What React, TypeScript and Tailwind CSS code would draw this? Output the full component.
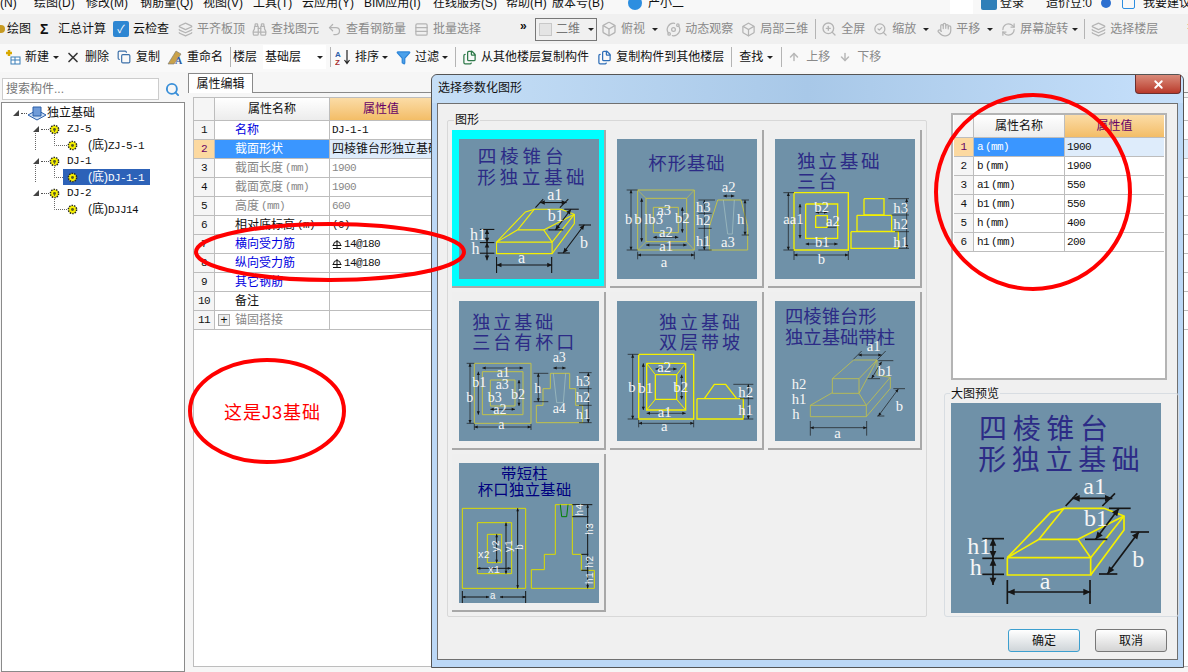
import type { ReactNode } from "react";
import {
  ArrowDown,
  ArrowUp,
  Binoculars,
  Box,
  Copy,
  Files,
  Filter,
  Hand,
  Layers,
  Orbit,
  RefreshCw,
  Rows3,
  Search,
  SearchCheck,
  Undo2,
  X,
  ZoomIn,
} from "lucide-react";

// ---- parametric figures, coordinates are taken straight from the picture ----
type Fig = {
  vb: string;
  titles: { text: string; x: number; y: number; adv: number; size: number; color?: string }[];
  polys: { pts: string; color: string; w: number; open?: boolean }[];
  dims: number[][];
  ticks: number[][];
  labels: (string | number)[][];
  labelSize: number;
  mono?: boolean;
  line: number;
  arrow: number;
};

const Y1 = "#f4f000";
const OL = "#c2c24a";

function rect(a: number, b: number, c: number, d: number) {
  return `${a},${b} ${c},${b} ${c},${d} ${a},${d} ${a},${b}`;
}

const fig1: Fig = {
  vb: "66 69 630 630",
  titles: [
    { text: "四棱锥台", x: 150, y: 176, adv: 101, size: 84 },
    { text: "形独立基础", x: 148, y: 270, adv: 100, size: 84 },
  ],
  polys: [
    { pts: rect(235, 533, 485, 585), color: Y1, w: 5 },
    { pts: "235,533 365,397 405,385 525,385 585,408 585,450 485,585", color: Y1, w: 5, open: true },
    { pts: "235,533 330,478 447,478 485,533", color: Y1, w: 5, open: true },
    { pts: "330,478 405,385", color: Y1, w: 5, open: true },
    { pts: "447,478 585,408", color: Y1, w: 5, open: true },
    { pts: "485,533 585,408", color: Y1, w: 5, open: true },
  ],
  dims: [
    [235, 636, 485, 636],
    [192, 475, 192, 535],
    [192, 535, 192, 615],
    [430, 355, 550, 355],
    [570, 385, 500, 478],
    [630, 455, 535, 582],
  ],
  ticks: [
    [235, 600, 235, 672],
    [483, 600, 483, 672],
    [160, 476, 225, 476],
    [160, 535, 225, 535],
    [160, 583, 225, 583],
    [410, 378, 445, 340],
    [520, 378, 558, 340],
    [540, 385, 605, 385],
    [468, 478, 535, 478],
    [605, 456, 660, 456],
    [510, 582, 565, 582],
  ],
  labels: [
    ["a1", 463, 343],
    ["b1", 465, 437],
    ["b", 610, 560],
    ["h1", 115, 522],
    ["h", 122, 586],
    ["a", 332, 626],
  ],
  labelSize: 72,
  line: 5,
  arrow: 22,
};

const fig2: Fig = {
  vb: "516 57 420 420",
  titles: [{ text: "杯形基础", x: 610, y: 150, adv: 58, size: 55 }],
  polys: [
    { pts: rect(578, 210, 748, 390), color: OL, w: 3 },
    { pts: rect(603, 235, 725, 365), color: OL, w: 3 },
    { pts: rect(625, 262, 700, 338), color: OL, w: 3 },
    { pts: "578,210 603,235", color: OL, w: 2, open: true },
    { pts: "748,210 725,235", color: OL, w: 2, open: true },
    { pts: "578,390 603,365", color: OL, w: 2, open: true },
    { pts: "748,390 725,365", color: OL, w: 2, open: true },
    { pts: "818,240 888,240 908,320 908,390 793,390 793,320 818,240", color: OL, w: 3 },
    { pts: "835,240 848,342 862,342 868,240", color: "#a9c6c6", w: 2, open: true },
  ],
  dims: [
    [558, 210, 558, 390],
    [590, 235, 590, 365],
    [712, 262, 712, 338],
    [603, 375, 725, 375],
    [625, 352, 700, 352],
    [578, 405, 748, 405],
    [835, 228, 868, 228],
    [778, 240, 778, 390],
    [900, 240, 900, 345],
  ],
  ticks: [
    [545, 210, 578, 210],
    [545, 390, 578, 390],
    [578, 395, 578, 418],
    [748, 395, 748, 418],
    [760, 240, 810, 240],
    [760, 280, 800, 280],
    [760, 325, 800, 325],
    [760, 390, 800, 390],
    [890, 240, 912, 240],
    [890, 345, 912, 345],
  ],
  labels: [
    ["b", 540, 312],
    ["b", 568, 312],
    ["l", 598, 312],
    ["b3", 610, 312],
    ["a3", 637, 285],
    ["b2", 690, 310],
    ["a2", 642, 350],
    ["a1", 643, 392],
    ["a", 647, 442],
    ["a2", 830, 216],
    ["h3", 753, 275],
    ["h2", 753, 315],
    ["h1", 753, 378],
    ["h", 876, 312],
    ["a3", 828, 380],
  ],
  labelSize: 44,
  line: 2,
  arrow: 10,
};

const fig3: Fig = {
  vb: "990 57 420 420",
  titles: [
    { text: "独立基础", x: 1056, y: 143, adv: 64, size: 56 },
    { text: "三台", x: 1056, y: 205, adv: 64, size: 56 },
  ],
  polys: [
    { pts: rect(1047, 218, 1210, 390), color: Y1, w: 4 },
    { pts: rect(1082, 252, 1178, 355), color: Y1, w: 4 },
    { pts: rect(1112, 287, 1147, 322), color: Y1, w: 4 },
    { pts: rect(1257, 236, 1317, 285), color: Y1, w: 4 },
    { pts: rect(1236, 286, 1340, 334), color: Y1, w: 4 },
    { pts: rect(1218, 335, 1360, 385), color: Y1, w: 4 },
  ],
  dims: [
    [1030, 218, 1030, 390],
    [1065, 252, 1065, 355],
    [1082, 372, 1178, 372],
    [1047, 405, 1210, 405],
    [1385, 236, 1385, 385],
    [1112, 277, 1147, 277],
  ],
  ticks: [
    [1015, 218, 1047, 218],
    [1015, 390, 1047, 390],
    [1047, 393, 1047, 420],
    [1210, 393, 1210, 420],
    [1330, 236, 1392, 236],
    [1340, 285, 1392, 285],
    [1350, 335, 1392, 335],
    [1360, 385, 1392, 385],
    [1147, 322, 1175, 322],
  ],
  labels: [
    ["aa1", 1015, 312],
    ["b2", 1108, 277],
    ["a2", 1143, 317],
    ["b1", 1110, 382],
    ["b", 1118, 432],
    ["h3", 1345, 278],
    ["h2", 1345, 327],
    ["h1", 1345, 380],
  ],
  labelSize: 44,
  line: 2,
  arrow: 10,
};

const fig4: Fig = {
  vb: "42 33 420 420",
  titles: [
    { text: "独立基础", x: 82, y: 117, adv: 63, size: 54 },
    { text: "三台有杯口", x: 82, y: 178, adv: 63, size: 54 },
  ],
  polys: [
    { pts: rect(88, 220, 258, 400), color: OL, w: 3 },
    { pts: rect(112, 245, 234, 374), color: OL, w: 3 },
    { pts: rect(136, 270, 210, 348), color: OL, w: 3 },
    {
      pts: "316,250 374,250 374,296 392,296 392,346 413,346 413,398 274,398 274,346 294,346 294,296 316,296 316,250",
      color: OL,
      w: 3,
    },
    { pts: "325,250 335,338 355,338 362,250", color: "#a9c6c6", w: 2, open: true },
  ],
  dims: [
    [75, 220, 75, 400],
    [100, 245, 100, 374],
    [222, 270, 222, 348],
    [112, 234, 234, 234],
    [136, 358, 210, 358],
    [88, 411, 258, 411],
    [325, 234, 362, 234],
    [280, 250, 280, 335],
    [430, 248, 430, 398],
  ],
  ticks: [
    [65, 220, 88, 220],
    [65, 400, 88, 400],
    [88, 402, 88, 420],
    [258, 402, 258, 420],
    [266, 250, 310, 250],
    [266, 335, 310, 335],
    [402, 248, 440, 248],
    [402, 296, 440, 296],
    [402, 346, 440, 346],
    [402, 398, 440, 398],
  ],
  labels: [
    ["b", 64, 335],
    ["b1", 82, 292],
    ["a1", 155, 260],
    ["a3", 152, 298],
    ["b3", 128, 335],
    ["b2", 198, 328],
    ["a2", 145, 372],
    ["a", 160, 417],
    ["a3", 323, 215],
    ["h", 268, 308],
    ["h3", 393, 288],
    ["h2", 393, 337],
    ["h1", 393, 388],
    ["a4", 323, 370],
  ],
  labelSize: 42,
  line: 2,
  arrow: 10,
};

const fig5: Fig = {
  vb: "516 33 420 420",
  titles: [
    { text: "独立基础", x: 642, y: 117, adv: 63, size: 54 },
    { text: "双层带坡", x: 642, y: 178, adv: 63, size: 54 },
  ],
  polys: [
    { pts: rect(581, 193, 746, 387), color: Y1, w: 4 },
    { pts: rect(605, 220, 722, 360), color: Y1, w: 4 },
    { pts: rect(631, 254, 695, 328), color: Y1, w: 4 },
    { pts: "605,220 631,254", color: Y1, w: 3, open: true },
    { pts: "722,220 695,254", color: Y1, w: 3, open: true },
    { pts: "605,360 631,328", color: Y1, w: 3, open: true },
    { pts: "722,360 695,328", color: Y1, w: 3, open: true },
    { pts: rect(756, 326, 895, 387), color: Y1, w: 4 },
    { pts: "778,326 808,283 842,283 875,326", color: Y1, w: 4, open: true },
  ],
  dims: [
    [563, 193, 563, 387],
    [595, 220, 595, 360],
    [710, 254, 710, 328],
    [631, 237, 695, 237],
    [605, 370, 722, 370],
    [581, 400, 746, 400],
    [910, 283, 910, 387],
  ],
  ticks: [
    [548, 193, 581, 193],
    [548, 387, 581, 387],
    [581, 390, 581, 412],
    [746, 390, 746, 412],
    [865, 283, 925, 283],
    [885, 326, 925, 326],
    [895, 387, 925, 387],
  ],
  labels: [
    ["b", 550, 305],
    ["b1", 580, 310],
    ["a2", 637, 245],
    ["b2", 685, 307],
    ["a1", 638, 382],
    ["a", 648, 424],
    ["h2", 880, 322],
    ["h1", 880, 374],
  ],
  labelSize: 44,
  line: 2,
  arrow: 10,
};

const fig6: Fig = {
  vb: "990 33 420 420",
  titles: [
    { text: "四棱锥台形", x: 1020, y: 100, adv: 55, size: 55 },
    { text: "独立基础带柱", x: 1020, y: 163, adv: 55, size: 55 },
  ],
  polys: [
    { pts: rect(1096, 346, 1264, 380), color: OL, w: 2.5 },
    { pts: rect(1162, 266, 1242, 310), color: OL, w: 2.5 },
    { pts: "1162,266 1226,210 1296,210 1242,266", color: OL, w: 2.5, open: true },
    { pts: "1096,346 1162,308", color: OL, w: 2.5, open: true },
    { pts: "1242,310 1296,210 1296,255 1336,262 1336,295 1264,380", color: OL, w: 2.5, open: true },
    { pts: "1242,310 1264,346 1336,262", color: OL, w: 2.5, open: true },
  ],
  dims: [
    [1240, 195, 1310, 195],
    [1310, 215, 1280, 265],
    [1360, 297, 1300, 378],
    [1096, 413, 1265, 413],
  ],
  ticks: [
    [1225, 208, 1250, 183],
    [1298, 208, 1322, 183],
    [1300, 212, 1345, 212],
    [1268, 266, 1305, 266],
    [1345, 296, 1380, 296],
    [1296, 378, 1318, 378],
    [1096, 393, 1096, 437],
    [1265, 393, 1265, 437],
  ],
  labels: [
    ["a1", 1265, 183],
    ["b1", 1298, 258],
    ["b", 1352, 362],
    ["a", 1168, 445],
    ["h2", 1040, 298],
    ["h1", 1040, 343],
    ["h", 1042, 388],
  ],
  labelSize: 44,
  line: 2,
  arrow: 10,
};

const fig7: Fig = {
  vb: "42 24 420 420",
  titles: [
    { text: "带短柱", x: 168, y: 72, adv: 47, size: 46, color: "#00007f" },
    { text: "杯口独立基础", x: 98, y: 120, adv: 47, size: 46, color: "#00007f" },
  ],
  polys: [
    { pts: rect(52, 160, 242, 400), color: "#dcdc00", w: 3 },
    { pts: rect(97, 203, 200, 356), color: "#dcdc00", w: 3 },
    { pts: rect(127, 238, 170, 323), color: "#dcdc00", w: 3 },
    {
      pts: "331,149 382,149 382,298 409,298 409,346 448,346 448,400 259,400 259,344 298,344 298,298 331,298 331,149",
      color: "#dcdc00",
      w: 3,
    },
    { pts: "346,149 350,185 365,185 369,149", color: "#008000", w: 3, open: true },
  ],
  dims: [
    [218, 160, 218, 400],
    [183, 203, 183, 356],
    [155, 238, 155, 323],
    [97, 340, 197, 340],
    [52, 426, 132, 426],
    [165, 426, 242, 426],
    [428, 149, 428, 400],
  ],
  ticks: [
    [52, 408, 52, 444],
    [242, 408, 242, 444],
    [382, 149, 442, 149],
    [382, 185, 430, 185],
    [409, 298, 430, 298],
    [409, 346, 430, 346],
  ],
  labels: [
    ["b", 235, 285, -90],
    ["y1", 200, 292, -90],
    ["y2", 162, 292, -90],
    ["x2", 98, 308],
    ["x1", 128, 354],
    ["a", 134, 432],
    ["h4", 415, 182, -90],
    ["h3", 445, 240, -90],
    ["h2", 445, 338, -90],
    ["h1", 445, 388, -90],
  ],
  labelSize: 30,
  mono: true,
  line: 3,
  arrow: 9,
};

function Figure({ fig }: { fig: Fig }) {
  const [vx, vy, vw, vh] = fig.vb.split(" ").map(Number);
  return (
    <svg viewBox={fig.vb} className="block h-full w-full">
      <rect x={vx} y={vy} width={vw} height={vh} fill="#6f91a8" />
      {fig.titles.map((t) => (
        <text
          key={t.text}
          x={Array.from(t.text)
            .map((_, i) => t.x + i * t.adv)
            .join(" ")}
          y={t.y}
          fontSize={t.size}
          fill={t.color ?? "#2c2b86"}
          fontFamily="'Noto Sans CJK SC', sans-serif"
        >
          {t.text}
        </text>
      ))}
      {fig.polys.map((p, i) => (
        <polyline key={i} points={p.pts} fill="none" stroke={p.color} strokeWidth={p.w} />
      ))}
      {fig.ticks.map((l, i) => (
        <line key={i} x1={l[0]} y1={l[1]} x2={l[2]} y2={l[3]} stroke="#161616" strokeWidth={fig.line} />
      ))}
      {fig.dims.map((l, i) => {
        const ang = Math.atan2(l[3] - l[1], l[2] - l[0]);
        const a = fig.arrow;
        const head = (x: number, y: number, d: number) => {
          const bx = x + Math.cos(ang) * a * d;
          const by = y + Math.sin(ang) * a * d;
          const nx = (-Math.sin(ang) * a) / 2.2;
          const ny = (Math.cos(ang) * a) / 2.2;
          return `${x},${y} ${bx + nx},${by + ny} ${bx - nx},${by - ny}`;
        };
        return (
          <g key={i} fill="#161616">
            <line x1={l[0]} y1={l[1]} x2={l[2]} y2={l[3]} stroke="#161616" strokeWidth={fig.line} />
            <polygon points={head(l[0], l[1], 1)} />
            <polygon points={head(l[2], l[3], -1)} />
          </g>
        );
      })}
      {fig.labels.map((l, i) => (
        <text
          key={i}
          x={l[1]}
          y={l[2]}
          fontSize={fig.labelSize}
          fill="#f6f6f6"
          fontFamily={fig.mono ? "'Liberation Mono', monospace" : "'Liberation Serif', serif"}
          transform={l[3] ? `rotate(${l[3]} ${l[1]} ${l[2]})` : undefined}
        >
          {l[0]}
        </text>
      ))}
    </svg>
  );
}

// ---- small pieces ----
function Mono({ children, className = "" }: { children: ReactNode; className?: string }) {
  return <span className={`font-['Liberation_Mono',monospace] text-[11px] tracking-[-0.6px] ${className}`}>{children}</span>;
}

function Caret({ className = "" }: { className?: string }) {
  return <span className={`h-0 w-0 shrink-0 border-x-[3px] border-t-[3px] border-x-transparent border-t-[#222] ${className}`} />;
}

function Sep({ className = "" }: { className?: string }) {
  return <span className={`h-[20px] w-px shrink-0 bg-[#b4b4b4] ${className}`} />;
}

function Tool({ icon, label, off, className = "" }: { icon: ReactNode; label: string; off?: boolean; className?: string }) {
  return (
    <div className={`flex shrink-0 items-center gap-[4px] ${off ? "text-[#8a8a8a]" : "text-[#111]"} ${className}`}>
      <span className="flex h-4 w-4 items-center justify-center">{icon}</span>
      <span>{label}</span>
    </div>
  );
}

function Gear() {
  return (
    <svg viewBox="0 0 12 12" className="h-[11px] w-[11px] shrink-0">
      <circle cx="6" cy="6" r="4.5" fill="#f6f000" stroke="#222" strokeWidth="1.6" strokeDasharray="1.6 1.2" />
      <circle cx="6" cy="6" r="1.6" fill="#5a5a20" />
    </svg>
  );
}

function Tri() {
  return (
    <svg viewBox="0 0 6 6" className="h-[6px] w-[6px] shrink-0">
      <polygon points="6,0 6,6 0,6" fill="#444" />
    </svg>
  );
}

function Rebar() {
  return (
    <svg viewBox="0 0 10 10" className="mr-[2px] inline-block h-[10px] w-[10px] align-[-1px]" fill="none" stroke="#111" strokeWidth="1">
      <path d="M1.5 6a3.5 3.5 0 0 1 7 0M.5 6.5h9M5 1v8M1 9.500h8" />
    </svg>
  );
}

function TreeGroup({ name, child, first, selected }: { name: string; child: string; first?: boolean; selected?: boolean }) {
  return (
    <>
      <div className="flex h-4 items-center pl-[31px]">
        <Tri />
        <span className="ml-[2px] w-[8px] border-t border-dotted border-[#555]" />
        <Gear />
        <Mono className="ml-[7px]">{name}</Mono>
      </div>
      <div className="relative flex h-4 items-center pl-[65px]">
        <svg className="absolute left-[30px] top-[-6px] h-[22px] w-[36px]" fill="none" stroke="#666" strokeDasharray="1 1">
          {first !== undefined && <path d="M3.500 2V20" />}
          <path d="M22.500 0V14.500H36" />
        </svg>
        {selected && <span className="absolute left-[61px] h-4 w-[87px] bg-[#2d62b8]" />}
        <span className="relative flex items-center">
          <Gear />
          <span className={`ml-[10px] ${selected ? "text-white" : "text-[#111]"}`}>
            (底)<Mono>{child}</Mono>
          </span>
        </span>
      </div>
    </>
  );
}

const propRows = [
  { n: "名称", v: "DJ-1-1", c: "text-[#0000e0]" },
  { n: "截面形状", v: "四棱锥台形独立基础", c: "text-white", sel: true },
  { n: "截面长度", u: "(mm)", v: "1900", c: "text-[#888]", vc: "text-[#888]" },
  { n: "截面宽度", u: "(mm)", v: "1900", c: "text-[#888]", vc: "text-[#888]" },
  { n: "高度", u: "(mm)", v: "600", c: "text-[#888]", vc: "text-[#888]" },
  { n: "相对底标高", u: "(m)", v: "(0)", c: "text-[#111]" },
  { n: "横向受力筋", v: "14@180", c: "text-[#0000e0]", bar: true },
  { n: "纵向受力筋", v: "14@180", c: "text-[#0000e0]", bar: true },
  { n: "其它钢筋", v: "", c: "text-[#0000e0]" },
  { n: "备注", v: "", c: "text-[#111]" },
  { n: "锚固搭接", v: "", c: "text-[#888]", plus: true },
];

const paramRows = [
  ["a", "1900"],
  ["b", "1900"],
  ["a1", "550"],
  ["b1", "550"],
  ["h", "400"],
  ["h1", "200"],
];

const thumbs = [fig1, fig2, fig3, fig4, fig5, fig6, fig7];

export default function App() {
  return (
    <div className="relative h-[672px] w-[1188px] overflow-hidden bg-[#f6f6f6] font-['Liberation_Sans','Noto_Sans_CJK_SC',sans-serif] text-[12px] leading-[14px] text-[#111]">
      {/* Menu bar, cut off by the top of the picture */}
      <div className="h-[14px] overflow-hidden bg-[#f8f8f8]">
        <div className="-mt-[8px] flex h-[22px] items-center whitespace-nowrap">
          <span className="w-[34px] shrink-0">(N)</span>
          <span className="w-[52px] shrink-0">绘图(D)</span>
          <span className="w-[54px] shrink-0">修改(M)</span>
          <span className="w-[63px] shrink-0">钢筋量(Q)</span>
          <span className="w-[50px] shrink-0">视图(V)</span>
          <span className="w-[49px] shrink-0">工具(T)</span>
          <span className="w-[62px] shrink-0">云应用(Y)</span>
          <span className="w-[69px] shrink-0">BIM应用(I)</span>
          <span className="w-[63px] shrink-0">在线服务(S)</span>
          <span className="ml-[10px] w-[46px] shrink-0">帮助(H)</span>
          <span className="w-[76px] shrink-0">版本号(B)</span>
          <span className="h-[14px] w-[14px] shrink-0 rounded-full bg-[#2c8ee0]" />
          <span className="ml-[6px] w-[36px] shrink-0">产小二</span>
          <span className="ml-[266px] h-[22px] w-[23px] shrink-0 bg-white" />
          <span className="ml-[8px] h-[14px] w-[16px] shrink-0 rounded-[2px] bg-[#2f7fb8]" />
          <span className="ml-[3px] w-[34px] shrink-0">登录</span>
          <span className="ml-[12px] w-[55px] shrink-0">造价豆:0</span>
          <span className="h-[10px] w-[10px] shrink-0 rounded-full bg-[#2c6fd0]" />
          <span className="ml-[11px] h-[12px] w-[13px] shrink-0 rounded-[2px] border border-[#2c8ee0]" />
          <span className="ml-[8px] shrink-0">我要建议</span>
        </div>
      </div>

      {/* Draw toolbar */}
      <div className="flex h-[30px] items-center overflow-hidden bg-[#f0f0f0] whitespace-nowrap">
        <span className="h-[8px] w-[5px] shrink-0 rounded-r-full bg-[#c69a22]" />
        <span className="ml-[2px]">绘图</span>
        <span className="ml-[9px] w-[10px] shrink-0 text-[14px] font-bold">Σ</span>
        <span className="ml-[8px]">汇总计算</span>
        <Tool
          className="ml-[7px]"
          label="云检查"
          icon={
            <span className="flex h-4 w-4 items-center justify-center rounded-[2px] bg-[#2d86d2] text-[11px] leading-none text-white">✓</span>
          }
        />
        <Tool off className="ml-[8px]" label="平齐板顶" icon={<Layers size={15} color="#b4b4b4" />} />
        <Tool off className="ml-[6px]" label="查找图元" icon={<Binoculars size={15} color="#b4b4b4" />} />
        <Tool off className="ml-[7px]" label="查看钢筋量" icon={<Undo2 size={15} color="#b4b4b4" />} />
        <Tool off className="ml-[7px]" label="批量选择" icon={<Rows3 size={15} color="#b4b4b4" />} />
        <span className="ml-[39px] -mt-[6px] w-[7px] shrink-0 font-bold">»</span>
        <div className="ml-[8px] flex h-[23px] w-[62px] shrink-0 items-center border border-[#777] pl-[3px] text-[#777]">
          <span className="h-[13px] w-[13px] border border-[#c8c8c8] bg-[#e4e4e4]" />
          <span className="ml-[4px]">二维</span>
          <Caret className="ml-[8px]" />
        </div>
        <Tool off className="ml-[4px]" label="俯视" icon={<Box size={16} color="#b4b4b4" />} />
        <Caret className="ml-[7px]" />
        <Tool off className="ml-[7px]" label="动态观察" icon={<Orbit size={15} color="#b4b4b4" />} />
        <Tool off className="ml-[7px]" label="局部三维" icon={<Box size={15} color="#b4b4b4" />} />
        <Sep className="ml-[7px]" />
        <Tool off className="ml-[5px]" label="全屏" icon={<ZoomIn size={16} color="#b4b4b4" />} />
        <Tool off className="ml-[7px]" label="缩放" icon={<SearchCheck size={15} color="#b4b4b4" />} />
        <Caret className="ml-[7px]" />
        <Tool off className="ml-[7px]" label="平移" icon={<Hand size={15} color="#b4b4b4" />} />
        <Caret className="ml-[7px]" />
        <Tool off className="ml-[7px]" label="屏幕旋转" icon={<RefreshCw size={15} color="#b4b4b4" />} />
        <Caret className="ml-[4px]" />
        <Sep className="ml-[6px]" />
        <Tool off className="ml-[5px]" label="选择楼层" icon={<Layers size={15} color="#b4b4b4" />} />
        <span className="ml-[29px] -mt-[6px] shrink-0 font-bold">»</span>
      </div>

      {/* Component toolbar */}
      <div className="flex h-[28px] items-center overflow-hidden bg-[#f9f9f9] pb-[2px] whitespace-nowrap">
        <Tool
          className="ml-[5px]"
          label="新建"
          icon={
            <svg viewBox="0 0 16 16" className="h-4 w-4">
              <rect x="6" y="8" width="9" height="7" fill="#fff" stroke="#3b7fb8" />
              <path d="M6 11h9M10 8v7" stroke="#3b7fb8" />
              <path d="M1 4h6M4 1v6" stroke="#d8a800" strokeWidth="2.500" />
            </svg>
          }
        />
        <Caret className="ml-[4px]" />
        <Tool className="ml-[6px]" label="删除" icon={<X size={17} color="#333" strokeWidth={2.5} />} />
        <Tool className="ml-[7px]" label="复制" icon={<Copy size={14} color="#3b6fa8" />} />
        <Tool
          className="ml-[7px]"
          label="重命名"
          icon={
            <svg viewBox="0 0 16 16" className="h-4 w-4">
              <path d="M1 15 9 2l5 3-7 10z" fill="#c9a24a" stroke="#777" strokeWidth=".6" />
              <text x="8" y="15" fontSize="10" fontWeight="bold" fill="#2f5c9c" fontFamily="'Liberation Serif', serif">
                A
              </text>
            </svg>
          }
        />
        <Sep className="ml-[7px]" />
        <span className="ml-[2px]">楼层</span>
        <div className="ml-[6px] flex h-[24px] w-[63px] shrink-0 items-center bg-white pl-[2px]">
          基础层
          <Caret className="ml-[16px]" />
        </div>
        <Sep className="ml-[4px]" />
        <Tool
          className="ml-[4px]"
          label="排序"
          icon={
            <svg viewBox="0 0 16 16" className="h-4 w-4">
              <text x="0" y="7.500" fontSize="8" fontWeight="bold" fill="#2d5fa8" fontFamily="'Liberation Sans', sans-serif">
                A
              </text>
              <text x="0" y="15.500" fontSize="8" fontWeight="bold" fill="#a83030" fontFamily="'Liberation Sans', sans-serif">
                Z
              </text>
              <path d="M12 1v13M9.500 11l2.500 3.500 2.500-3.500" fill="none" stroke="#222" strokeWidth="1.200" />
            </svg>
          }
        />
        <Caret className="ml-[3px]" />
        <Tool className="ml-[7px]" label="过滤" icon={<Filter size={15} color="#2f86d8" fill="#4aa0ea" />} />
        <Caret className="ml-[3px]" />
        <Sep className="ml-[7px]" />
        <Tool className="ml-[5px]" label="从其他楼层复制构件" icon={<Files size={15} color="#2f7a4a" />} />
        <Tool className="ml-[7px]" label="复制构件到其他楼层" icon={<Files size={15} color="#2f6fb8" />} />
        <Sep className="ml-[7px]" />
        <span className="ml-[7px]">查找</span>
        <Caret className="ml-[4px]" />
        <Sep className="ml-[8px]" />
        <Tool off className="ml-[4px]" label="上移" icon={<ArrowUp size={12} color="#b8b8b8" strokeWidth={3} />} />
        <Tool off className="ml-[7px]" label="下移" icon={<ArrowDown size={12} color="#b8b8b8" strokeWidth={3} />} />
      </div>

      {/* Main area */}
      <div className="flex h-[600px]">
        {/* Component tree */}
        <div className="flex h-full w-[185px] shrink-0 flex-col pl-[1px] pt-[6px]">
          <div className="flex items-center">
            <div className="ml-[1px] flex h-[22px] w-[157px] items-center border border-[#ccc] bg-white pl-[3px] text-[#777]">搜索构件...</div>
            <Search size={15} color="#3a8fd8" strokeWidth={3} className="ml-[6px]" />
          </div>
          <div className="mt-[2px] min-h-0 flex-1 border border-[#8a8a8a] bg-white pt-[2px]">
            <div className="flex h-4 items-center pl-[11px]">
              <Tri />
              <span className="ml-[2px] w-[6px] border-t border-dotted border-[#555]" />
              <svg viewBox="0 0 20 18" className="h-[18px] w-[20px] shrink-0">
                <path d="M1 11 10 6l9 5-9 5z" fill="#cfe0f4" stroke="#2b5ea8" />
                <path d="M6 3h8v9H6z" fill="#6f9bd8" stroke="#2b5ea8" />
              </svg>
              <span>独立基础</span>
            </div>
            <TreeGroup name="ZJ-5" child="ZJ-5-1" first />
            <TreeGroup name="DJ-1" child="DJ-1-1" first selected />
            <TreeGroup name="DJ-2" child="DJJ14" />
          </div>
        </div>

        {/* Property editor */}
        <div className="flex min-w-0 flex-1 flex-col pl-[3px] pt-px">
          <div className="h-[20px] border-b border-[#8a8a8a]">
            <div className="flex h-[20px] w-[65px] items-center justify-center border border-b-0 border-[#8a8a8a] bg-white">属性编辑</div>
          </div>
          <div className="ml-[5px] mt-[4px] h-[570px] w-[1000px] border border-[#bdbdbd] bg-white">
            <div className="flex h-[23px] border-b border-[#bdbdbd]">
              <div className="w-[21px] border-r border-[#bdbdbd] bg-[#f5f5f5]" />
              <div className="flex w-[115px] items-center justify-center border-r border-[#bdbdbd] bg-linear-to-b from-white to-[#ececec]">属性名称</div>
              <div className="flex w-[102px] items-center justify-center bg-linear-to-b from-[#fbdca6] to-[#f3bd66] text-[#660066]">属性值</div>
            </div>
            {propRows.map((r, i) => (
              <div key={r.n} className="flex h-[19px] border-b border-[#bdbdbd]">
                <div
                  className={`flex w-[21px] items-center justify-center border-r border-[#bdbdbd] ${
                    r.sel ? "bg-[#fcd9a0] text-[#660066]" : "bg-[#f5f5f5]"
                  }`}
                >
                  <Mono>{i + 1}</Mono>
                </div>
                <div className={`flex w-[115px] items-center border-r border-[#bdbdbd] ${r.sel ? "bg-[#3a96ff]" : ""} ${r.c}`}>
                  {r.plus ? (
                    <span className="ml-[3px] mr-[5px] flex h-[12px] w-[12px] items-center justify-center border border-[#aaa] bg-[#eee] text-[12px] leading-none text-[#111]">
                      +
                    </span>
                  ) : (
                    <span className="w-[20px]" />
                  )}
                  {r.n}
                  {r.u && <Mono className="ml-[2px] text-[10px]">{r.u}</Mono>}
                </div>
                <div className={`flex flex-1 items-center pl-[2px] ${r.sel ? "bg-[#deecfb]" : ""} ${r.vc ?? ""}`}>
                  {r.bar && <Rebar />}
                  {r.sel ? r.v : <Mono>{r.v}</Mono>}
                </div>
              </div>
            ))}
          </div>
        </div>
      </div>

      {/* Dialog */}
      <div className="absolute left-[431px] top-[74px] flex h-[594px] w-[753px] flex-col rounded-t-[6px] border border-[#555] bg-[#bcd8f6] px-[5px] pb-[7px]">
        <div className="-mx-[5px] flex h-[28px] shrink-0 rounded-t-[6px] bg-linear-to-r from-[#c6dff7] via-[#a8c8e8] to-[#c6e0fb] pl-[6px]">
          <span className="mt-[6px] text-[#111]">选择参数化图形</span>
          <div className="ml-auto mr-[2px] flex h-[19px] w-[46px] items-center justify-center rounded-b-[4px] border border-t-0 border-[#6b3030] bg-linear-to-b from-[#d98a7a] to-[#b8382a]">
            <X size={13} color="#fff" strokeWidth={3.5} />
          </div>
        </div>
        <div className="min-h-0 flex-1 border border-[#707070] bg-[#f0f0f0]">
          <div className="flex items-start">
            {/* Shape picker */}
            <div className="relative ml-[9px] mt-[16px] h-[497px] w-[480px] shrink-0 rounded-[2px] border border-[#d8d8d8] pl-[4px] pt-[9px]">
              <span className="absolute -top-[8px] left-[6px] bg-[#f0f0f0] px-px">图形</span>
              <div className="grid grid-cols-[154px_154px_154px] gap-[4px]">
                {thumbs.map((f, i) => (
                  <div
                    key={f.vb}
                    className={`h-[158px] border-b-2 border-r-2 border-b-[#a8a8a8] border-r-[#a8a8a8] pl-[7px] pt-[9px] ${
                      i === 0 ? "bg-[#00ffff]" : "bg-[#efefef]"
                    }`}
                  >
                    <div className="h-[140px] w-[140px]">
                      <Figure fig={f} />
                    </div>
                  </div>
                ))}
              </div>
            </div>

            {/* Parameters and preview */}
            <div className="ml-[17px] w-[235px] shrink-0">
              <div className="ml-[7px] mt-[9px] h-[267px] w-[216px] border-2 border-[#b4b4b4] bg-white pl-px">
                <div className="flex h-[23px] border-b border-[#bdbdbd]">
                  <div className="w-[20px] border-r border-[#bdbdbd] bg-[#f5f5f5]" />
                  <div className="flex w-[91px] items-center justify-center border-r border-[#bdbdbd] bg-linear-to-b from-white to-[#ececec]">属性名称</div>
                  <div className="flex w-[99px] items-center justify-center bg-linear-to-b from-[#fbdca6] to-[#f3bd66] text-[#660066]">属性值</div>
                </div>
                {paramRows.map((r, i) => (
                  <div key={r[0]} className="flex h-[19px] w-[210px] border-b border-[#bdbdbd]">
                    <div
                      className={`flex w-[20px] items-center justify-center border-r border-[#bdbdbd] ${
                        i === 0 ? "bg-[#fcd9a0] text-[#660066]" : "bg-[#f5f5f5]"
                      }`}
                    >
                      <Mono>{i + 1}</Mono>
                    </div>
                    <div className={`flex w-[91px] items-center border-r border-[#bdbdbd] pl-[3px] ${i === 0 ? "bg-[#3a96ff] text-white" : ""}`}>
                      <Mono className="text-[10px]">{r[0]}</Mono>
                      <Mono className="ml-[2px] text-[10px]">(mm)</Mono>
                    </div>
                    <div className={`flex flex-1 items-center pl-[2px] ${i === 0 ? "bg-[#deecfb]" : ""}`}>
                      <Mono>{r[1]}</Mono>
                    </div>
                  </div>
                ))}
              </div>
              <div className="relative mt-[13px] h-[224px] w-[235px] rounded-[3px] border border-[#d8dde2] pl-[6px] pt-[9px]">
                <span className="absolute -top-[7px] left-[5px] bg-[#f0f0f0] px-px">大图预览</span>
                <div className="h-[210px] w-[210px]">
                  <Figure fig={fig1} />
                </div>
              </div>
            </div>
          </div>
          <div className="mt-[12px] flex justify-end gap-[15px] pr-[10px]">
            <button className="h-[23px] w-[72px] rounded-[3px] border border-[#3c9fcf] bg-linear-to-b from-white to-[#cfd5d9]">确定</button>
            <button className="h-[23px] w-[72px] rounded-[3px] border border-[#777] bg-linear-to-b from-white to-[#d4d4d4]">取消</button>
          </div>
        </div>
      </div>

      {/* Red hand drawn notes on top of the screenshot */}
      <svg className="pointer-events-none absolute left-0 top-0 h-[672px] w-[1188px]" viewBox="0 0 1188 672" fill="none" stroke="#ff0000" strokeWidth="4">
        <ellipse cx="330" cy="252" rx="134" ry="28" />
        <ellipse cx="1033" cy="192" rx="97" ry="97" />
        <ellipse cx="267" cy="411" rx="77" ry="51" />
      </svg>
      <span className="pointer-events-none absolute left-[224px] top-[403px] text-[18px] leading-[20px] tracking-[1px] text-[#ff0000]">这是J3基础</span>
    </div>
  );
}
